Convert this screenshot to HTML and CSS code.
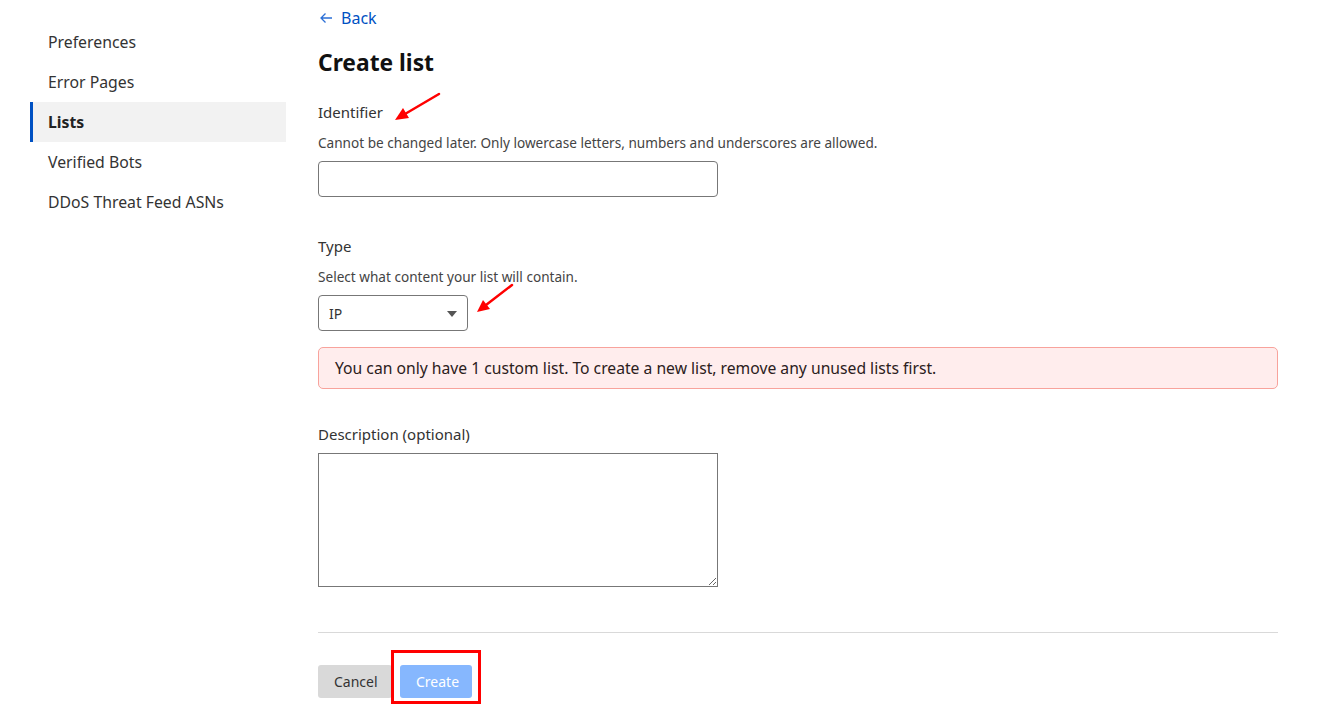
FILE: index.html
```html
<!DOCTYPE html>
<html lang="en">
<head>
  <meta charset="UTF-8" />
  <title>Create list</title>
  <link rel="stylesheet" href="styles.css">
</head>
<body>
  <div class="layout">
    <nav class="sidebar">
      <a href="#">Preferences</a>
      <a href="#">Error Pages</a>
      <a href="#" class="active">Lists</a>
      <a href="#">Verified Bots</a>
      <a href="#">DDoS Threat Feed ASNs</a>
    </nav>

    <main class="content">
      <a href="#" class="back">
        <svg width="14" height="12" viewBox="0 0 14 12"><path d="M13 6H2M6.5 1.5L2 6l4.5 4.5" fill="none" stroke="#2b6fd6" stroke-width="1.3"/></svg>
        Back
      </a>
      <h1>Create list</h1>

      <form>
        <label class="field-label" for="identifier">Identifier</label>
        <p class="helper">Cannot be changed later. Only lowercase letters, numbers and underscores are allowed.</p>
        <input type="text" id="identifier" class="text-input">

        <label class="field-label type-label" for="type">Type</label>
        <p class="helper">Select what content your list will contain.</p>
        <div class="select-wrap">
          <select id="type">
            <option>IP</option>
          </select>
        </div>

        <div class="alert">You can only have 1 custom list. To create a new list, remove any unused lists first.</div>

        <label class="field-label desc-label" for="description">Description (optional)</label>
        <textarea id="description"></textarea>

        <hr>

        <div class="actions">
          <button type="button" class="btn btn-cancel">Cancel</button>
          <button type="button" class="btn btn-create">Create</button>
        </div>
      </form>
    </main>
  </div>

  <!-- screenshot annotations -->
  <svg class="arrow arrow-1" width="50" height="34" viewBox="0 0 50 34">
    <line x1="46" y1="3" x2="12" y2="23" stroke="#f00" stroke-width="2.5" stroke-linecap="round"/>
    <polygon points="2,29 10,17 16,27" fill="#f00"/>
  </svg>
  <svg class="arrow arrow-2" width="40" height="34" viewBox="0 0 40 34">
    <line x1="37" y1="3" x2="11" y2="23" stroke="#f00" stroke-width="2.5" stroke-linecap="round"/>
    <polygon points="2,30 8,18 15,27" fill="#f00"/>
  </svg>
  <div class="highlight-box"></div>
</body>
</html>
```

FILE: styles.css
```css
body {
  margin: 0;
  font-family: "Noto Sans", "Open Sans", Arial, sans-serif;
  color: #333;
  background: #fff;
}
.layout {
  display: flex;
  gap: 32px;
  padding-left: 30px;
}
.sidebar {
  width: 256px;
  flex-shrink: 0;
  padding-top: 22px;
  display: flex;
  flex-direction: column;
}
.sidebar a {
  display: block;
  height: 40px;
  line-height: 40px;
  padding-left: 18px;
  font-size: 15.8px;
  color: #333;
  text-decoration: none;
  border-left: 3px solid transparent;
  margin-left: -3px;
}
.sidebar a.active {
  background: #f2f2f2;
  border-left-color: #0051c3;
  margin-left: 0;
  padding-left: 15px;
  font-weight: bold;
  color: #222;
}
.content {
  width: 960px;
  padding-top: 8px;
}
.back {
  display: flex;
  align-items: center;
  gap: 8px;
  line-height: 20px;
  font-size: 16px;
  color: #0051c3;
  text-decoration: none;
  padding-left: 1px;
}
h1 {
  margin: 20px 0 0;
  font-size: 22.8px;
  line-height: 30px;
  color: #111;
}
form {
  display: flex;
  flex-direction: column;
  align-items: flex-start;
}
.field-label {
  display: block;
  margin-top: 23px;
  font-size: 15px;
  line-height: 22px;
  color: #333;
}
.type-label {
  margin-top: 38px;
}
.desc-label {
  margin-top: 34px;
}
.helper {
  margin: 11px 0 0;
  font-size: 13.6px;
  line-height: 18px;
  color: #444;
}
.text-input {
  margin-top: 9px;
  width: 400px;
  height: 36px;
  box-sizing: border-box;
  border: 1px solid #777;
  border-radius: 4px;
  font: inherit;
  padding: 0 10px;
}
.select-wrap {
  position: relative;
  margin-top: 9px;
}
.select-wrap select {
  appearance: none;
  -webkit-appearance: none;
  width: 150px;
  height: 36px;
  box-sizing: border-box;
  border: 1px solid #777;
  border-radius: 4px;
  background: #fff;
  font-family: inherit;
  font-size: 14px;
  color: #333;
  padding: 0 10px;
}
.select-wrap::after {
  content: "";
  position: absolute;
  right: 11px;
  top: 16px;
  border-left: 5px solid transparent;
  border-right: 5px solid transparent;
  border-top: 6px solid #555;
  pointer-events: none;
}
.alert {
  margin-top: 16px;
  width: 100%;
  box-sizing: border-box;
  padding: 10px 16px;
  line-height: 20px;
  font-size: 15.7px;
  color: #2b2020;
  background: #ffeded;
  border: 1px solid #f8a39c;
  border-radius: 5px;
}
textarea {
  margin-top: 8px;
  width: 400px;
  height: 134px;
  box-sizing: border-box;
  border: 1px solid #777;
  border-radius: 0;
  font: inherit;
}
hr {
  width: 100%;
  margin: 45px 0 0;
  border: none;
  border-top: 1px solid #d9d9d9;
}
.actions {
  display: flex;
  gap: 8px;
  margin-top: 32px;
}
.btn {
  height: 33px;
  border: none;
  border-radius: 3px;
  font-family: inherit;
  font-size: 14px;
  padding: 0 16px;
}
.btn-cancel {
  width: 74px;
  background: #d9d9d9;
  color: #333;
}
.btn-create {
  width: 72px;
  background: #86b7fe;
  color: #fff;
}
.arrow {
  position: absolute;
}
.arrow-1 {
  left: 393px;
  top: 91px;
}
.arrow-2 {
  left: 475px;
  top: 282px;
}
.highlight-box {
  position: absolute;
  left: 391px;
  top: 650px;
  width: 84px;
  height: 48px;
  border: 3px solid #f00;
}
```
